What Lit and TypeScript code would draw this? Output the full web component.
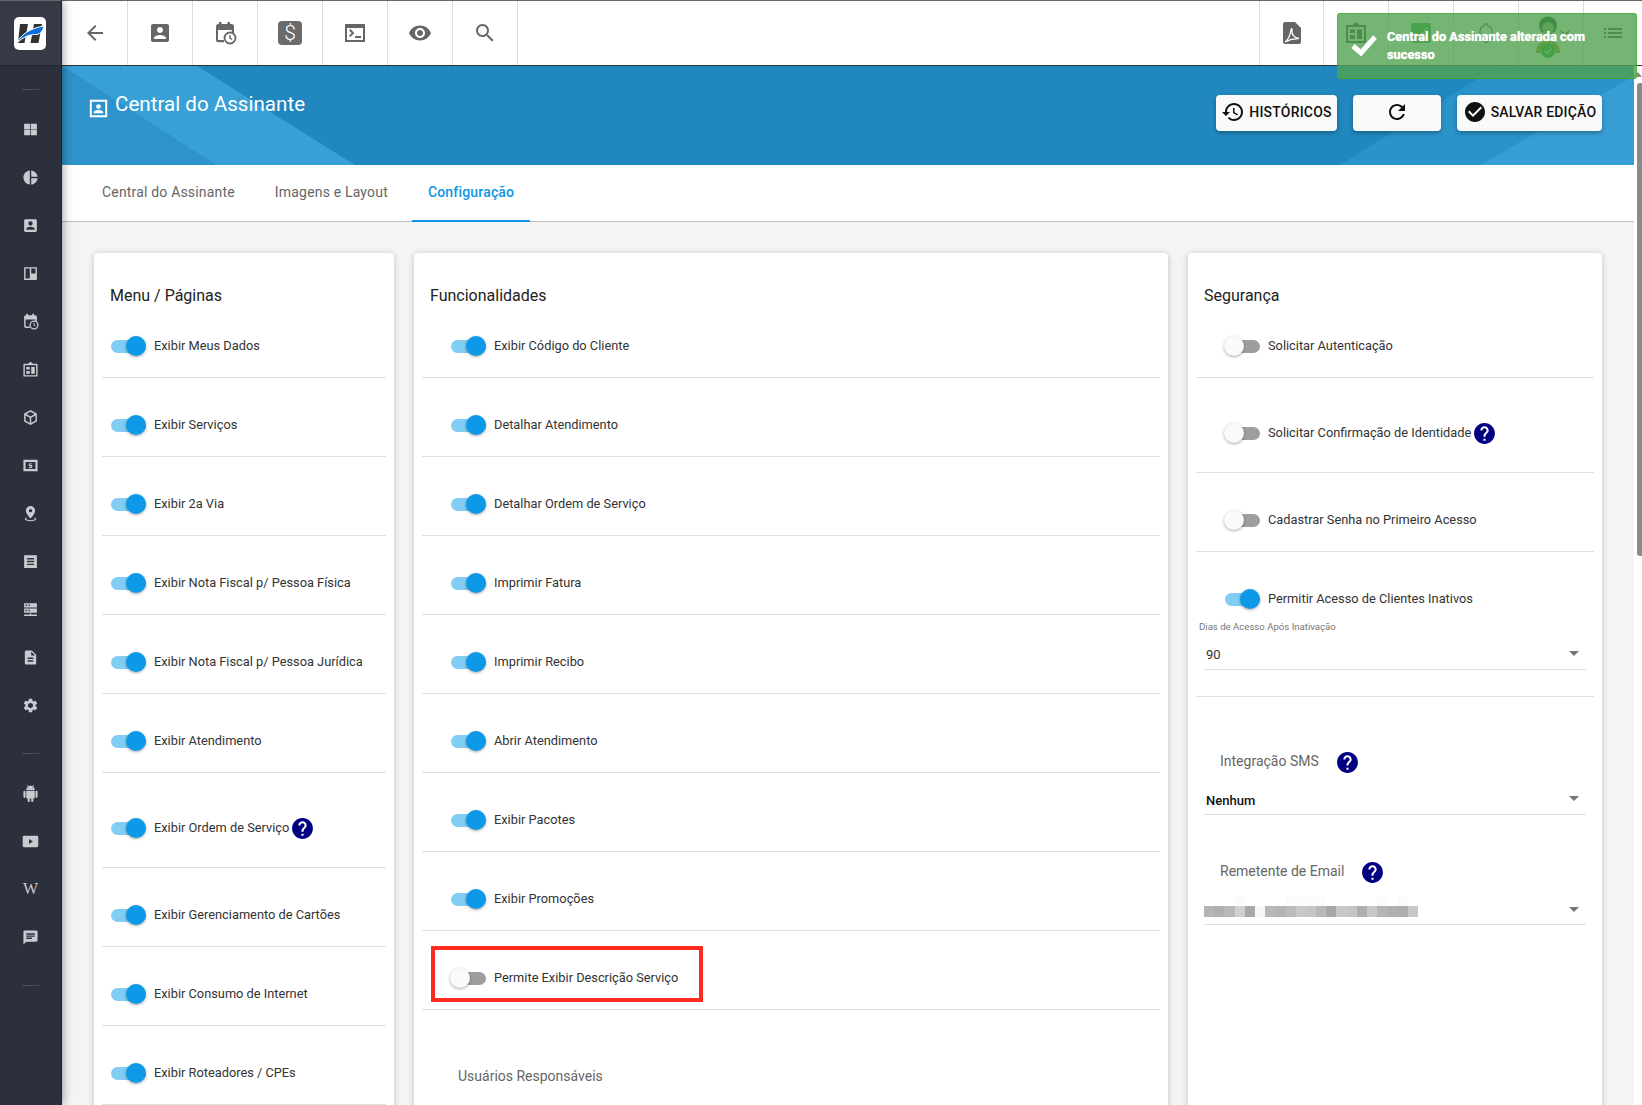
import { LitElement, html, css, svg } from 'lit';
import { customElement } from 'lit/decorators.js';

const P = {
  back: 'M20 11H7.83l5.59-5.59L12 4l-8 8 8 8 1.41-1.41L7.83 13H20v-2z',
  person: 'M3 5v14c0 1.1.89 2 2 2h14c1.1 0 2-.9 2-2V5c0-1.1-.9-2-2-2H5c-1.11 0-2 .9-2 2zm12 4c0 1.66-1.34 3-3 3s-3-1.34-3-3 1.34-3 3-3 3 1.34 3 3zm-9 8c0-2 4-3.1 6-3.1s6 1.1 6 3.1v1H6v-1z',
  eye: 'M12 4.5C7 4.5 2.73 7.61 1 12c1.73 4.39 6 7.5 11 7.5s9.27-3.11 11-7.5c-1.73-4.39-6-7.5-11-7.5zM12 17c-2.76 0-5-2.24-5-5s2.24-5 5-5 5 2.24 5 5-2.24 5-5 5zm0-8c-1.66 0-3 1.34-3 3s1.34 3 3 3 3-1.34 3-3-1.34-3-3-3z',
  search: 'M15.5 14h-.79l-.28-.27C15.41 12.59 16 11.11 16 9.5 16 5.91 13.09 3 9.5 3S3 5.91 3 9.5 5.91 16 9.5 16c1.61 0 3.09-.59 4.23-1.57l.27.28v.79l5 4.99L20.49 19l-4.99-5zm-6 0C7.01 14 5 11.99 5 9.5S7.01 5 9.5 5 14 7.01 14 9.5 11.99 14 9.5 14z',
  history: 'M13 3c-4.97 0-9 4.03-9 9H1l3.89 3.89.07.14L9 12H6c0-3.87 3.13-7 7-7s7 3.13 7 7-3.13 7-7 7c-1.93 0-3.68-.79-4.94-2.06l-1.42 1.42C8.27 19.99 10.51 21 13 21c4.97 0 9-4.03 9-9s-4.03-9-9-9zm-1 5v5l4.28 2.54.72-1.21-3.5-2.08V8H12z',
  refresh: 'M17.65 6.35C16.2 4.9 14.21 4 12 4c-4.42 0-7.99 3.58-7.99 8s3.57 8 7.99 8c3.73 0 6.84-2.55 7.73-6h-2.08c-.82 2.33-3.04 4-5.65 4-3.31 0-6-2.69-6-6s2.69-6 6-6c1.66 0 3.14.69 4.22 1.78L13 11h7V4l-2.35 2.35z',
  check: 'M12 2C6.48 2 2 6.48 2 12s4.48 10 10 10 10-4.48 10-10S17.52 2 12 2zm-2 15l-5-5 1.41-1.41L10 14.17l7.59-7.59L19 8l-9 9z',
  help: 'M12 2C6.48 2 2 6.48 2 12s4.48 10 10 10 10-4.48 10-10S17.52 2 12 2zm1 17h-2v-2h2v2zm2.07-7.75l-.9.92C13.45 12.9 13 13.5 13 15h-2v-.5c0-1.1.45-2.1 1.17-2.83l1.24-1.26c.37-.36.59-.86.59-1.41 0-1.1-.9-2-2-2s-2 .9-2 2H8c0-2.21 1.79-4 4-4s4 1.79 4 4c0 .88-.36 1.68-.93 2.25z',
  list: 'M3 13h2v-2H3v2zm0 4h2v-2H3v2zm0-8h2V7H3v2zm4 4h14v-2H7v2zm0 4h14v-2H7v2zM7 7v2h14V7H7z',
  grid: 'M3 4h8.5v7.5H3zM12.5 4H21v7.5h-8.500zM3 12.500h8.500V20H3zM12.500 12.500H21V20h-8.500z',
  pie: 'M11 2v20c-5.07-.5-9-4.79-9-10s3.93-9.5 9-10zm2.030 0v8.990H22c-.47-4.740-4.240-8.520-8.970-8.990zm0 11.010V22c4.740-.47 8.500-4.250 8.970-8.990h-8.970z',
  board: 'M3 3h18v18H3zM5 5v14h6V5zM13 5v7h6V5z',
  gear: 'M19.140 12.940c.04-.3.06-.61.06-.94 0-.32-.02-.64-.07-.94l2.030-1.580c.18-.14.23-.41.12-.61l-1.920-3.320c-.12-.22-.37-.29-.59-.22l-2.390.96c-.5-.38-1.030-.7-1.620-.94l-.36-2.540c-.04-.24-.24-.41-.48-.41h-3.840c-.24 0-.43.17-.47.41l-.36 2.540c-.59.24-1.130.57-1.620.94l-2.390-.96c-.22-.08-.47 0-.59.22L2.740 8.870c-.12.21-.08.47.12.61l2.030 1.580c-.05.3-.09.63-.09.94s.02.64.07.94l-2.030 1.580c-.18.14-.23.41-.12.61l1.920 3.320c.12.22.37.29.59.22l2.390-.96c.5.38 1.030.7 1.620.94l.36 2.540c.05.24.24.41.48.41h3.840c.24 0 .44-.17.47-.41l.36-2.540c.59-.24 1.130-.56 1.620-.94l2.390.96c.22.08.47 0 .59-.22l1.920-3.320c.12-.22.07-.47-.12-.61l-2.010-1.580zM12 15.600c-1.980 0-3.600-1.620-3.600-3.600s1.620-3.600 3.600-3.600 3.600 1.620 3.600 3.600-1.620 3.600-3.600 3.600z',
  android: 'M6 18c0 .55.45 1 1 1h1v3.500c0 .83.67 1.500 1.500 1.500s1.500-.67 1.500-1.500V19h2v3.500c0 .83.67 1.500 1.500 1.500s1.500-.67 1.500-1.500V19h1c.55 0 1-.45 1-1V8H6v10zM3.500 8C2.670 8 2 8.670 2 9.500v7c0 .83.67 1.500 1.500 1.500S5 17.330 5 16.500v-7C5 8.670 4.330 8 3.500 8zm17 0c-.83 0-1.500.67-1.500 1.500v7c0 .83.67 1.500 1.500 1.500s1.500-.67 1.500-1.500v-7c0-.83-.67-1.500-1.500-1.500zm-4.970-5.840l1.300-1.300c.2-.2.2-.51 0-.71-.2-.2-.51-.2-.71 0l-1.480 1.480C13.850 1.230 12.950 1 12 1c-.96 0-1.860.23-2.660.63L7.850.15c-.2-.2-.51-.2-.71 0-.2.2-.2.51 0 .71l1.310 1.310C6.970 3.260 6 5.010 6 7h12c0-1.990-.97-3.750-2.470-4.840zM10 5H9V4h1v1zm5 0h-1V4h1v1z',
  chat: 'M20 2H4c-1.100 0-1.990.9-1.990 2L2 22l4-4h14c1.100 0 2-.9 2-2V4c0-1.100-.9-2-2-2zM6 9h12v2H6V9zm8 5H6v-2h8v2zm4-6H6V6h12v2z',
  doc: 'M14 2H6c-1.100 0-1.990.9-1.990 2L4 20c0 1.100.89 2 1.990 2H18c1.100 0 2-.9 2-2V8l-6-6zm2 16H8v-2h8v2zm0-4H8v-2h8v2zm-3-5V3.500L18.500 9H13z',
  place: 'M12 1.500C8.400 1.500 5.500 4.400 5.500 8c0 4.600 6.500 11 6.500 11s6.500-6.400 6.500-11c0-3.600-2.900-6.500-6.500-6.500zm0 8.900a2.400 2.400 0 1 1 0-4.800 2.400 2.400 0 0 1 0 4.800zM6 17.500c-1.300.6-2 1.400-2 2.300 0 1.800 3.600 3.200 8 3.200s8-1.400 8-3.200c0-.9-.7-1.700-2-2.300l-.9 1.300c.8.3 1.200.7 1.200 1 0 .6-2.500 1.700-6.300 1.700s-6.300-1.100-6.300-1.700c0-.3.4-.7 1.200-1z',
  box: 'M12 1.500 3 6.500v11l9 5 9-5v-11zM12 4l5.800 3.200L12 10.500 6.200 7.200zM5 9l6 3.400v7.200l-6-3.300zM13 19.600v-7.200L19 9v7.300z',
  cash: 'M2 4h20v16H2zM5 7v10h14V7zM13 8v1h-2.500a1 1 0 0 0-1 1v2a1 1 0 0 0 1 1H13v1H9.500v1.500H11V16h2v-.5a1.500 1.500 0 0 0 1.500-1.500v-2a1 1 0 0 0-1-1H11v-1h3.500V9H13V8z',
  lines: 'M3 3h18v18H3zM7 7v2h10V7zM7 11v2h10v-2zM7 15v2h10v-2z',
  server: 'M3 3h18v6H3zM5 5v2h2V5zM9 5v2h2V5zM3 10.500h18v6H3zM5 12.500v2h2v-2zM9 12.500v2h2v-2zM11 17.500h2V19h8v2H3v-2h8z',
  play: 'M3 4h18a2 2 0 0 1 2 2v12a2 2 0 0 1-2 2H3a2 2 0 0 1-2-2V6a2 2 0 0 1 2-2zM10 8.500v7l5.500-3.500z',
  kiosk: 'M12 1l3.500 3H21a1 1 0 0 1 1 1v16a1 1 0 0 1-1 1H3a1 1 0 0 1-1-1V5a1 1 0 0 1 1-1h5.500zM4 6v14h16V6zM6 8.500h5V12H6zM6 14h5v4H6zM13 8.500h5V18h-5z',
};

const icon = (d: string, cls = '') => html`<svg class="ic ${cls}" viewBox="0 0 24 24"><path d=${d} fill-rule="evenodd"></path></svg>`;

const calClock = (bg = '#fff') => html`<svg class="ic" viewBox="0 0 24 24">
  <path d="M6 1h2.500v2h6V1H17v2h1.500A2.500 2.500 0 0 1 21 5.500V12h-2.200V9H5v10h6v2.200H5.500A2.500 2.500 0 0 1 3 18.700V5.500A2.500 2.500 0 0 1 5.500 3H6z"></path>
  ${svg`<circle cx="17" cy="17" r="5.500" fill=${bg} stroke="currentColor" stroke-width="1.800"></circle>
  <path d="M17 14v3.200l2.200 1.300" fill="none" stroke="currentColor" stroke-width="1.400"></path>`}
</svg>`;

const sideTop = [P.grid, P.pie, P.person, P.board, 'cal', P.kiosk, P.box, P.cash, P.place, P.lines, P.server, P.doc, P.gear];

const menuRows = [
  { t: 'Exibir Meus Dados', on: true }, { t: 'Exibir Serviços', on: true }, { t: 'Exibir 2a Via', on: true },
  { t: 'Exibir Nota Fiscal p/ Pessoa Física', on: true }, { t: 'Exibir Nota Fiscal p/ Pessoa Jurídica', on: true },
  { t: 'Exibir Atendimento', on: true }, { t: 'Exibir Ordem de Serviço', on: true, help: true },
  { t: 'Exibir Gerenciamento de Cartões', on: true }, { t: 'Exibir Consumo de Internet', on: true },
  { t: 'Exibir Roteadores / CPEs', on: true },
];
const featRows = [
  { t: 'Exibir Código do Cliente', on: true }, { t: 'Detalhar Atendimento', on: true },
  { t: 'Detalhar Ordem de Serviço', on: true }, { t: 'Imprimir Fatura', on: true }, { t: 'Imprimir Recibo', on: true },
  { t: 'Abrir Atendimento', on: true }, { t: 'Exibir Pacotes', on: true }, { t: 'Exibir Promoções', on: true },
  { t: 'Permite Exibir Descrição Serviço', on: false, mark: true },
];
const secRows = [
  { t: 'Solicitar Autenticação', on: false }, { t: 'Solicitar Confirmação de Identidade', on: false, help: true },
  { t: 'Cadastrar Senha no Primeiro Acesso', on: false },
];
const mosaicTop = ['ff', 'ff', 'ff', 'fb', 'ff', 'ff', 'ff', 'ff', 'fc', 'fc', 'fb', 'fc', 'ff', 'ff', 'ff', 'ff', 'ff', 'fb', 'ff', 'fb', 'ff'];
const mosaic = ['b5', 'b0', 'b8', 'd0', 'a8', 'f7', 'b8', 'b5', 'bb', 'c8', 'c5', 'b8', 'a8', 'c8', 'c5', 'ae', 'c8', 'b5', 'b0', 'ae', 'c8'];

@customElement('app-root')
export class AppRoot extends LitElement {
  static styles = css`
    :host {
      display: block;
      width: 100%;
      height: 100vh;
      overflow: hidden;
      font-family: Roboto, "Liberation Sans", sans-serif;
      color: #333;
      background: #f4f4f4;
    }
    * { box-sizing: border-box; }
    .ic { display: block; width: 24px; height: 24px; fill: currentColor; flex: none; }

    .shell { display: flex; height: 100%; }

    /* sidebar */
    .sidebar {
      width: 62px;
      flex: none;
      background: #2c303d;
      border-right: 1px solid #1b2238;
      box-shadow: 0 0 10px rgba(0, 0, 0, .45);
      position: relative;
      z-index: 2;
      color: #c9cbd0;
    }
    .logo-box {
      height: 66px;
      background: #363a47;
      border-top: 1px solid #666;
      border-bottom: 1px solid #242733;
      display: flex;
      align-items: center;
      justify-content: center;
      padding-right: 1px;
    }
    .logo { width: 32px; height: 33px; background: #fff; border-radius: 5px; display: block; }
    .side-sep { height: 1px; width: 17px; background: #4a4e5a; margin: 23px auto 15px; }
    .side-sep.second { margin: 24px auto 15px; }
    .side-sep.third { margin: 24px auto 0; }
    .side-item { height: 48px; display: flex; align-items: center; justify-content: center; }
    .side-item .ic { width: 17px; height: 17px; }
    .side-w { font-family: "Liberation Serif", serif; font-size: 16px; color: #c9cbd0; }

    /* main */
    .main { flex: 1; min-width: 0; display: flex; flex-direction: column; }
    .topbar {
      height: 66px;
      flex: none;
      background: #fff;
      border-top: 1px solid #666;
      border-bottom: 1px solid #333;
      display: flex;
      justify-content: space-between;
      color: #666;
    }
    .tb-group { display: flex; }
    .tb {
      width: 65px;
      display: flex;
      align-items: center;
      justify-content: center;
      border-right: 1px solid #ddd;
    }
    .tb-first { width: 66px; }
    .tb-left { border-left: 1px solid #ddd; }
    .under { color: #3a3a3a; }
    .tb-right .tb:last-child { width: 58px; border-right: none; }
    .dollar {
      width: 24px;
      height: 24px;
      border-radius: 4px;
      background: #6b6b6b;
      color: #fff;
      font-size: 21px;
      font-weight: 300;
      line-height: 24px;
      text-align: center;
    }
    .check-box {
      width: 20px;
      height: 20px;
      background: #2e9e35;
      border-radius: 2px;
      display: flex;
      align-items: center;
      justify-content: center;
    }
    .avatar { width: 26px; height: 50px; display: block; margin-left: 2px; }
    .chev { display: block; margin-left: -1px; }

    .toast {
      position: absolute;
      left: 1337px;
      top: 13px;
      width: 300px;
      height: 66px;
      background: rgba(81, 163, 81, .8);
      border: 1px solid rgba(70, 166, 40, .55);
      border-bottom-color: #45a527;
      border-radius: 3px;
      z-index: 5;
      display: flex;
      color: #fff;
      font-size: 12.800px;
      font-weight: 700;
      line-height: 18.300px;
      text-shadow: 0 0 1px rgba(255, 255, 255, .9);
    }
    .toast-check { width: 28px; height: 24px; margin: 19px 9px 0 12px; flex: none; display: block; }
    .toast-text { padding-top: 14px; width: 210px; }

    .below { flex: 1; min-height: 0; display: flex; }
    .content { flex: 1; min-width: 0; display: flex; flex-direction: column; overflow: hidden; }
    .hero {
      height: 99px;
      flex: none;
      background: #2088be;
      position: relative;
      display: flex;
      justify-content: space-between;
      padding: 0 32px 0 27px;
    }
    .hero-bg { position: absolute; inset: 0; width: 100%; height: 100%; display: block; }
    .hero-title {
      position: relative;
      display: flex;
      align-items: flex-start;
      gap: 7px;
      color: #fff;
      font-size: 20.600px;
      line-height: 28px;
      padding-top: 24px;
    }
    .hero-title .ic { width: 19px; height: 19px; margin-top: 9px; }
    .hero-btns { position: relative; display: flex; gap: 16px; padding-top: 29px; }
    .btn {
      height: 36px;
      background: #fafafa;
      border-radius: 4px;
      box-shadow: 0 2px 4px rgba(0, 0, 0, .3);
      color: #111;
      font-size: 14px;
      font-weight: 500;
      letter-spacing: .2px;
      display: flex;
      align-items: center;
      justify-content: center;
      gap: 4px;
      padding-bottom: 2px;
    }
    .btn-h { width: 121px; }
    .btn-r { width: 88px; }
    .btn-s { width: 145px; }

    .tabs {
      height: 57px;
      flex: none;
      background: #fff;
      border-bottom: 1px solid #bbb;
      display: flex;
      gap: 8px;
      padding-left: 24px;
    }
    .tab {
      padding: 0 16px;
      font-size: 14px;
      color: #666;
      line-height: 55px;
      letter-spacing: .18px;
      border-bottom: 2px solid transparent;
      height: 57px;
    }
    .tab.active { color: #0f94e6; font-weight: 500; border-bottom-color: #0f94e6; }

    .cards {
      flex: 1;
      display: grid;
      grid-template-columns: 300px 754px 414px;
      column-gap: 20px;
      padding: 31px 32px 0;
      align-items: start;
    }
    .card {
      background: #fff;
      border-radius: 4px;
      box-shadow: 0 1px 6px rgba(0, 0, 0, .22);
      padding: 31px 8px 0;
      min-height: 900px;
    }
    .card-title { font-size: 16px; line-height: 24px; color: #222; padding-left: 8px; }
    .row {
      display: flex;
      align-items: center;
      min-height: 79px;
      padding: 36px 0 20px 29px;
      border-bottom: 1px solid #e0e0e0;
      position: relative;
      font-size: 12.800px;
      line-height: 22px;
      color: #333;
    }
    .menu .row { padding-left: 9px; }
    .card-title + .row { padding-top: 27px; min-height: 70px; }
    .row.tall { min-height: 95px; }
    .row.open { border-bottom: none; padding-bottom: 0; min-height: 58px; }
    .row .help { margin-left: 1px; }
    .help { color: #000080; width: 25px; height: 25px; }
    .toggle { display: flex; align-items: center; width: 35px; height: 13px; border-radius: 7px; background: #81cdf3; margin-right: 8px; flex: none; justify-content: flex-end; }
    .toggle i { display: block; width: 20px; height: 20px; border-radius: 50%; background: #0d99e8; box-shadow: 0 1px 3px rgba(0, 0, 0, .35); flex: none; }
    .toggle.off { background: #9e9e9e; justify-content: flex-start; }
    .toggle.off i { background: #fafafa; margin-left: -1px; }
    .mark { position: absolute; left: 9px; top: 15px; width: 272px; height: 56px; border: 4px solid #ff2a1f; }

    .small-label { font-size: 9.600px; line-height: 12px; color: #777; padding-left: 3px; margin-top: 11px; }
    .select {
      margin: 12px 8px 0;
      height: 25px;
      border-bottom: 1px solid #ddd;
      display: flex;
      align-items: center;
      justify-content: space-between;
      font-size: 13px;
      color: #333;
      padding: 0 7px 5px 2px;
    }
    .select.bold { font-weight: 500; color: #111; margin-top: 11px; padding-bottom: 4px; }
    .select.blur { padding: 0 7px 7px 0; margin-top: 11px; align-items: flex-end; }
    .select::after {
      content: "";
      width: 0;
      height: 0;
      border-left: 5px solid transparent;
      border-right: 5px solid transparent;
      border-top: 5px solid #757575;
      margin-bottom: 3px;
    }
    .select.blur::after { margin-bottom: 5px; }
    .mosaic-row { display: flex; height: 11px; }
    .mosaic-row.faint { height: 10px; }
    .mosaic-row i { display: block; width: 10.200px; }
    .sep-block { padding-bottom: 26px; border-bottom: 1px solid #e0e0e0; }
    .sub-label {
      display: flex;
      align-items: center;
      height: 36px;
      gap: 16px;
      padding-left: 24px;
      font-size: 14px;
      color: #666;
    }
    .sub-label .help { margin-top: 2px; }
    .sms { margin-top: 46px; }
    .mail { margin-top: 38px; }
    .resp { font-size: 14px; color: #666; padding-left: 36px; margin-top: 56px; line-height: 20px; }

    .scroll { width: 8px; flex: none; background: #fff; display: flex; flex-direction: column; align-items: flex-end; }
    .scroll-arrow { width: 0; height: 0; border-left: 4px solid transparent; border-right: 4px solid transparent; border-bottom: 5px solid #8a8a8a; margin-top: 6px; }
    .scroll-thumb { width: 5px; height: 473px; background: #8a8a8a; border-radius: 3px 0 0 3px; margin-top: 6px; }
  `;

  private toggleRow(r: { t: string; on: boolean; help?: boolean; mark?: boolean }) {
    return html`<div class="row ${r.help ? 'tall' : ''}">
      <span class="toggle ${r.on ? '' : 'off'}"><i></i></span>
      <span>${r.t}</span>
      ${r.help ? icon(P.help, 'help') : ''}
      ${r.mark ? html`<div class="mark"></div>` : ''}
    </div>`;
  }

  render() {
    return html`
      <div class="shell">
        <aside class="sidebar">
          <div class="logo-box">
            <svg class="logo" viewBox="0 0 32 33">
              <path d="M6 7h8l-3.500 19H4z M20 7h8l-3.500 19h-8z" fill="#333"></path>
              <path d="M3 26C7 17 17 11 30 9c-1 5-4 8-7 8.500C16 17 9 20 3 26z" fill="#0a6ee0" stroke="#fff" stroke-width="1"></path>
            </svg>
          </div>
          <div class="side-sep"></div>
          ${sideTop.map(d => html`<div class="side-item">${d === 'cal' ? calClock('#2c303d') : icon(d)}</div>`)}
          <div class="side-sep second"></div>
          <div class="side-item">${icon(P.android)}</div>
          <div class="side-item">${icon(P.play)}</div>
          <div class="side-item"><span class="side-w">W</span></div>
          <div class="side-item">${icon(P.chat)}</div>
          <div class="side-sep third"></div>
        </aside>

        <div class="main">
          <header class="topbar">
            <div class="tb-group">
              <div class="tb tb-first">${icon(P.back)}</div>
              <div class="tb">${icon(P.person)}</div>
              <div class="tb">${calClock()}</div>
              <div class="tb"><div class="dollar">$</div></div>
              <div class="tb">
                <svg class="ic" viewBox="0 0 24 24"><path fill-rule="evenodd" d="M2 3h20v18H2zM4 7v12h16V7zM6 9.500l1.400-1.400 4 4-4 4L6 14.700l2.700-2.600zM12 15h6v2h-6z"></path></svg>
              </div>
              <div class="tb">${icon(P.eye)}</div>
              <div class="tb">${icon(P.search)}</div>
            </div>
            <div class="tb-group tb-right">
              <div class="tb tb-left">
                <svg class="ic" viewBox="0 0 24 24">
                  <path d="M5 1h10l6 6v14a2 2 0 0 1-2 2H5a2 2 0 0 1-2-2V3a2 2 0 0 1 2-2z"></path>
                  <path d="M5 21c3-2 5-6 6-12 .3-2 1.500-1.500 1 1-.5 3 2 7 7 7.500-3 .3-8 0-14 3.500z" fill="none" stroke="#fff" stroke-width="1.300"></path>
                </svg>
              </div>
              <div class="tb under">${icon(P.kiosk)}</div>
              <div class="tb">
                <div class="check-box">
                  <svg width="14" height="12" viewBox="0 0 14 12"><path d="M1 6l4 4 8-9" fill="none" stroke="#cfe9cf" stroke-width="1.300"></path></svg>
                </div>
              </div>
              <div class="tb under">
                <svg class="ic" viewBox="0 0 24 24"><path d="M12 2.500c.8 0 1.300.6 1.300 1.300v.5C16 5 18 7.500 18 10.500V16l1.500 2H4.500L6 16v-5.500C6 7.500 8 5 10.700 4.300v-.5c0-.7.500-1.300 1.300-1.300zM10 19.500h4a2 2 0 0 1-4 0z" fill="none" stroke="currentColor" stroke-width="1.200"></path></svg>
              </div>
              <div class="tb under">
                <svg class="avatar" viewBox="0 0 26 50">
                  <circle cx="13" cy="17.500" r="9" fill="#00381a"></circle>
                  <circle cx="13" cy="20" r="6" fill="#7fae6a"></circle>
                  <path d="M1 45c0-9 5-12 12-12s12 3 12 12z" fill="#9a8400"></path>
                  <circle cx="13" cy="43" r="7" fill="#159a2c"></circle>
                  <path d="M9.500 43l2.500 2.500 4.500-5" fill="none" stroke="#c6f0c6" stroke-width="1.200"></path>
                </svg>
                <svg class="chev" width="10" height="6" viewBox="0 0 10 6"><path d="M1 1l4 4 4-4" fill="none" stroke="#3a3a3a" stroke-width="1.300"></path></svg>
              </div>
              <div class="tb under">${icon(P.list)}</div>
            </div>
          </header>

          <div class="toast">
            <svg class="toast-check" viewBox="0 0 28 24"><path d="M3 13l8 7L25 4" fill="none" stroke="#fff" stroke-width="5"></path></svg>
            <div class="toast-text">Central do Assinante alterada com sucesso</div>
          </div>

          <div class="below">
            <div class="content">
              <section class="hero">
                <svg class="hero-bg" viewBox="0 0 1572 100" preserveAspectRatio="none">
                  <polygon points="0,0 154,100 0,100" fill="#2d93ca"></polygon>
                  <polygon points="0,0 135,0 293,100 154,100" fill="#39a0d7"></polygon>
                  <polygon points="1436,0 1572,0 1572,100 1278,100" fill="#2a93ca"></polygon>
                  <polygon points="1572,10 1572,100 1418,100" fill="#379ed5"></polygon>
                </svg>
                <div class="hero-title">
                  <svg class="ic" viewBox="0 0 24 24"><path fill-rule="evenodd" d="M1 1h22v22H1zM3.500 3.500v17h17v-17zM12 6.500a3 3 0 1 1 0 6 3 3 0 0 1 0-6zM6 18v-1c0-2 4-3 6-3s6 1 6 3v1z"></path></svg>
                  <span>Central do Assinante</span>
                </div>
                <div class="hero-btns">
                  <div class="btn btn-h">${icon(P.history)}<span>HISTÓRICOS</span></div>
                  <div class="btn btn-r">${icon(P.refresh)}</div>
                  <div class="btn btn-s">${icon(P.check)}<span>SALVAR EDIÇÃO</span></div>
                </div>
              </section>

              <nav class="tabs">
                <div class="tab">Central do Assinante</div>
                <div class="tab">Imagens e Layout</div>
                <div class="tab active">Configuração</div>
              </nav>

              <div class="cards">
                <div class="card menu">
                  <div class="card-title">Menu / Páginas</div>
                  ${menuRows.map(r => this.toggleRow(r))}
                </div>
                <div class="card">
                  <div class="card-title">Funcionalidades</div>
                  ${featRows.map(r => this.toggleRow(r))}
                  <div class="resp">Usuários Responsáveis</div>
                </div>
                <div class="card">
                  <div class="card-title">Segurança</div>
                  ${secRows.map(r => this.toggleRow(r))}
                  <div class="sep-block">
                    <div class="row open">
                      <span class="toggle"><i></i></span>
                      <span>Permitir Acesso de Clientes Inativos</span>
                    </div>
                    <div class="small-label">Dias de Acesso Após Inativação</div>
                    <div class="select"><span>90</span></div>
                  </div>
                  <div class="sub-label sms"><span>Integração SMS</span>${icon(P.help, 'help')}</div>
                  <div class="select bold"><span>Nenhum</span></div>
                  <div class="sub-label mail"><span>Remetente de Email</span>${icon(P.help, 'help')}</div>
                  <div class="select blur">
                    <div>
                      <div class="mosaic-row faint">${mosaicTop.map(c => html`<i style="background:#${c}${c}${c}"></i>`)}</div>
                      <div class="mosaic-row">${mosaic.map(c => html`<i style="background:#${c}${c}${c}"></i>`)}</div>
                    </div>
                  </div>
                </div>
              </div>
            </div>
            <div class="scroll">
              <div class="scroll-arrow"></div>
              <div class="scroll-thumb"></div>
            </div>
          </div>
        </div>
      </div>
    `;
  }
}
